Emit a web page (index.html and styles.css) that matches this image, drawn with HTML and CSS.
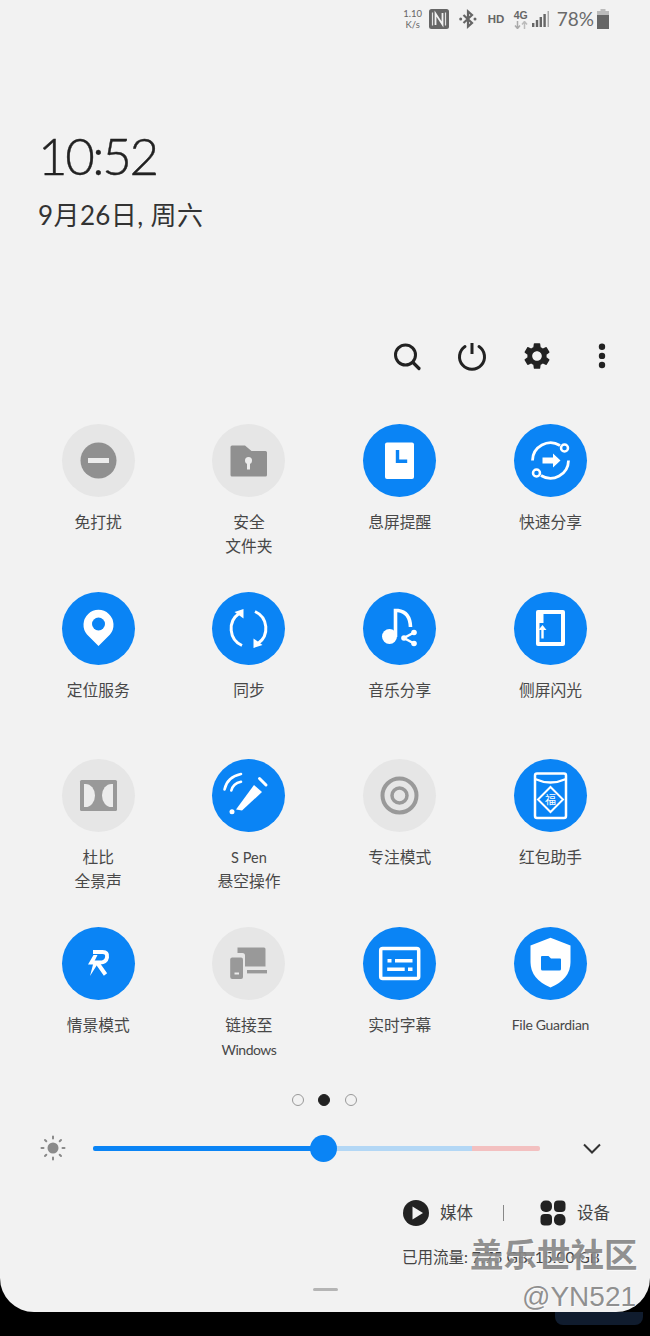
FILE: index.html
```html
<!DOCTYPE html>
<html lang="zh">
<head>
<meta charset="utf-8">
<title>快捷面板</title>
<link rel="stylesheet" href="styles.css">
</head>
<body>
<div class="panel">
  <div class="status">
    <div class="speed"><span>1.10</span><span>K/s</span></div>
    <svg class="st-nfc" width="20" height="20" viewBox="0 0 20 20"><rect width="20" height="20" rx="2.5" fill="#666"/><path d="M3.500 3.500v13M16.500 3.500v13" stroke="#e4e4e4" stroke-width="1.200"/><path d="M6.500 16V4.500L13.500 15.500V4" fill="none" stroke="#f2f2f2" stroke-width="1.800"/></svg>
    <svg class="st-bt" width="20" height="20" viewBox="0 0 20 20"><path d="M5.500 6l8.500 8-4 3.500V2.500l4 3.500-8.500 8" fill="none" stroke="#666" stroke-width="2.200"/><circle cx="2.700" cy="10" r="1.500" fill="#666"/><circle cx="17" cy="10" r="1.500" fill="#666"/></svg>
    <span class="st-hd">HD</span>
    <div class="st-4g"><span>4G</span><svg width="14" height="8" viewBox="0 0 14 8"><path d="M3.500 0v7M1 4.500l2.500 3 2.500-3" fill="none" stroke="#aaa" stroke-width="1.500"/><path d="M10.500 8V1M8 3.500l2.500-3 2.500 3" fill="none" stroke="#bbb" stroke-width="1.500"/></svg></div>
    <svg class="st-sig" width="18" height="18" viewBox="0 0 18 18"><rect x="0" y="13" width="2.400" height="4" fill="#666"/><rect x="3.800" y="10" width="2.400" height="7" fill="#666"/><rect x="7.600" y="7" width="2.400" height="10" fill="#666"/><rect x="11.400" y="4" width="2.400" height="13" fill="#666"/><rect x="15.500" y="1" width="1.500" height="16" fill="#aaa"/></svg>
    <span class="st-pct">78%</span>
    <svg class="st-bat" width="12" height="20" viewBox="0 0 12 20"><rect x="3.500" y="0" width="5" height="3" fill="#bbb"/><rect x="0" y="2" width="12" height="5" fill="#bbb"/><rect x="0" y="6" width="12" height="14" fill="#666"/></svg>
  </div>

  <div class="clock">10:52</div>
  <div class="date">9月26日, 周六</div>

  <div class="toolbar">
    <div class="tool"><svg width="32" height="32" viewBox="0 0 32 32"><circle cx="14.500" cy="15" r="10" fill="none" stroke="#222" stroke-width="3"/><path d="M22 22.500l6 6" stroke="#222" stroke-width="3.200" stroke-linecap="round"/></svg></div>
    <div class="tool"><svg width="32" height="32" viewBox="0 0 32 32"><path d="M9 6.500a12.500 12.500 0 1 0 14 0" fill="none" stroke="#222" stroke-width="3" stroke-linecap="round"/><path d="M16 3v11" stroke="#222" stroke-width="3"/></svg></div>
    <div class="tool"><svg width="32" height="32" viewBox="0 0 24 24"><path fill="#222" d="M19.140 12.940c.04-.3.06-.61.06-.94 0-.32-.02-.64-.07-.94l2.030-1.580a.49.49 0 0 0 .12-.61l-1.920-3.320a.488.488 0 0 0-.59-.22l-2.390.96c-.5-.38-1.030-.7-1.620-.94l-.36-2.540a.484.484 0 0 0-.48-.41h-3.840c-.24 0-.43.17-.47.41l-.36 2.540c-.59.24-1.130.57-1.620.94l-2.390-.96c-.22-.08-.47 0-.59.22L2.740 8.870c-.12.21-.08.47.12.61l2.030 1.580c-.05.3-.09.63-.09.94s.02.64.07.94l-2.030 1.580a.49.49 0 0 0-.12.61l1.920 3.320c.12.22.37.29.59.22l2.390-.96c.5.38 1.030.7 1.620.94l.36 2.540c.05.24.24.41.48.41h3.840c.24 0 .44-.17.47-.41l.36-2.540c.59-.24 1.130-.56 1.620-.94l2.390.96c.22.08.47 0 .59-.22l1.920-3.320c.12-.22.07-.47-.12-.61l-2.010-1.580zM12 15.600c-1.980 0-3.600-1.620-3.600-3.600s1.620-3.600 3.600-3.600 3.600 1.620 3.600 3.600-1.620 3.600-3.600 3.600z"/></svg></div>
    <div class="tool"><svg width="32" height="32" viewBox="0 0 32 32"><circle cx="16" cy="6.700" r="3.200" fill="#222"/><circle cx="16" cy="15.900" r="3.200" fill="#222"/><circle cx="16" cy="25" r="3.200" fill="#222"/></svg></div>
  </div>

  <div class="grid">
    <div class="tile">
      <div class="circle off"><svg width="73" height="73" viewBox="0 0 73 73"><circle cx="36.500" cy="36.500" r="18" fill="#909090"/><rect x="26" y="34" width="21" height="5" fill="#ececec"/></svg></div>
      <div class="label">免打扰</div>
    </div>
    <div class="tile">
      <div class="circle off"><svg width="73" height="73" viewBox="0 0 73 73"><path d="M20 21.500h13l6.500 5.500H53.500a1.500 1.500 0 0 1 1.500 1.500v22.500a1.500 1.500 0 0 1-1.500 1.500H20a1.500 1.500 0 0 1-1.500-1.500V23a1.500 1.500 0 0 1 1.500-1.500z" fill="#909090"/><circle cx="36.500" cy="36.500" r="3.500" fill="#ececec"/><rect x="35" y="37" width="3" height="8.500" fill="#ececec"/></svg></div>
      <div class="label">安全<br>文件夹</div>
    </div>
    <div class="tile">
      <div class="circle on"><svg width="73" height="73" viewBox="0 0 73 73"><rect x="22" y="18.500" width="29" height="36.500" rx="2" fill="#fff"/><path d="M34.500 26v11.200h9.700" fill="none" stroke="#0a84f5" stroke-width="3.400"/></svg></div>
      <div class="label">息屏提醒</div>
    </div>
    <div class="tile">
      <div class="circle on"><svg width="73" height="73" viewBox="0 0 73 73"><path d="M18.500 36.500A18 18 0 0 1 46 21.500M54.500 36.500A18 18 0 0 1 27 51.500" fill="none" stroke="#fff" stroke-width="2.800"/><circle cx="50.500" cy="24" r="3.500" fill="#0a84f5" stroke="#fff" stroke-width="2.500"/><circle cx="22.500" cy="49" r="3.500" fill="#0a84f5" stroke="#fff" stroke-width="2.500"/><path d="M28.500 33.500H39V29.500L46.500 36.500 39 43.500V39.500H28.500z" fill="#fff"/></svg></div>
      <div class="label">快速分享</div>
    </div>

    <div class="tile">
      <div class="circle on"><svg width="73" height="73" viewBox="0 0 73 73"><path d="M36.500 54L25 42.500a15 15 0 1 1 23 0z" fill="#fff"/><circle cx="36.500" cy="32" r="6.500" fill="#0a84f5"/></svg></div>
      <div class="label">定位服务</div>
    </div>
    <div class="tile">
      <div class="circle on"><svg width="73" height="73" viewBox="0 0 73 73"><path d="M30 53.500A18.500 18.500 0 0 1 27 21.500" fill="none" stroke="#fff" stroke-width="3"/><path d="M31.500 17v9.500L22.500 20z" fill="#fff"/><path d="M43 19.500A18.500 18.500 0 0 1 46 51.500" fill="none" stroke="#fff" stroke-width="3"/><path d="M41.500 56v-9.500L50.500 53z" fill="#fff"/></svg></div>
      <div class="label">同步</div>
    </div>
    <div class="tile">
      <div class="circle on"><svg width="73" height="73" viewBox="0 0 73 73"><circle cx="26.500" cy="44.500" r="7.500" fill="#fff"/><path d="M32.500 45V18.500h2.500Q47 20 47.500 35" fill="none" stroke="#fff" stroke-width="3.600"/><path d="M51 40.500L41 46l10 5.500" fill="none" stroke="#fff" stroke-width="2.500"/><circle cx="51" cy="40.500" r="2.800" fill="#fff"/><circle cx="41" cy="46" r="2.800" fill="#fff"/><circle cx="51" cy="51.500" r="2.800" fill="#fff"/></svg></div>
      <div class="label">音乐分享</div>
    </div>
    <div class="tile">
      <div class="circle on"><svg width="73" height="73" viewBox="0 0 73 73"><rect x="22" y="18" width="29" height="36" rx="2" fill="#fff"/><rect x="29.500" y="22" width="17.500" height="28" fill="#0a84f5"/><rect x="25.500" y="31" width="6" height="19" fill="#0a84f5"/><path d="M28.500 36V46.500" fill="none" stroke="#fff" stroke-width="2.400"/><path d="M24.500 38L28.500 33l4 5z" fill="#fff"/></svg></div>
      <div class="label">侧屏闪光</div>
    </div>

    <div class="tile">
      <div class="circle off"><svg width="73" height="73" viewBox="0 0 73 73"><rect x="18" y="21" width="37" height="31" rx="1.500" fill="#999"/><path d="M22 25h1.500a9.500 11.500 0 0 1 0 23H22z" fill="#ececec"/><path d="M51 25h-1.500a9.500 11.500 0 0 0 0 23H51z" fill="#ececec"/></svg></div>
      <div class="label">杜比<br>全景声</div>
    </div>
    <div class="tile">
      <div class="circle on"><svg width="73" height="73" viewBox="0 0 73 73"><path d="M24 50.500L42 26l8 7-20 18.500z" fill="#fff"/><path d="M47.500 19.500l6.500 6.500" stroke="#fff" stroke-width="3" stroke-linecap="round"/><circle cx="20" cy="52.700" r="2.500" fill="#fff"/><path d="M12.500 30.500Q15 18 29 15" fill="none" stroke="#fff" stroke-width="2.600" stroke-linecap="round"/><path d="M19.300 31.500Q21 24.500 29 22.700" fill="none" stroke="#fff" stroke-width="2.600" stroke-linecap="round"/></svg></div>
      <div class="label"><span class="latin">S Pen</span><br>悬空操作</div>
    </div>
    <div class="tile">
      <div class="circle off"><svg width="73" height="73" viewBox="0 0 73 73"><circle cx="36.500" cy="36.500" r="17" fill="none" stroke="#999" stroke-width="4"/><circle cx="36.500" cy="36.500" r="7.500" fill="none" stroke="#999" stroke-width="3.500"/></svg></div>
      <div class="label">专注模式</div>
    </div>
    <div class="tile">
      <div class="circle on"><svg width="73" height="73" viewBox="0 0 73 73"><rect x="21" y="14.500" width="31" height="44.500" rx="2" fill="none" stroke="#fff" stroke-width="2.500"/><path d="M21 20Q36.500 27 52 20" fill="none" stroke="#fff" stroke-width="2.300"/><path d="M36.500 28L49 40.500 36.500 53 24 40.500z" fill="none" stroke="#fff" stroke-width="2"/><text x="36.500" y="45" class="fu">福</text></svg></div>
      <div class="label">红包助手</div>
    </div>

    <div class="tile">
      <div class="circle on"><svg width="73" height="73" viewBox="0 0 73 73"><path d="M31 25H40.500Q46 25 45 30.500 44 35.500 38 35.500H35L43.500 47.500" fill="none" stroke="#fff" stroke-width="4"/><path d="M31.500 28L26 37.500H31L28 49 37.500 34H32.500L35.500 28z" fill="#fff"/></svg></div>
      <div class="label">情景模式</div>
    </div>
    <div class="tile">
      <div class="circle off"><svg width="73" height="73" viewBox="0 0 73 73"><path d="M25.500 20.500H52a1.500 1.500 0 0 1 1.500 1.500v17.500H33v-11a2.500 2.500 0 0 0-2.500-2.500h-5z" fill="#999"/><rect x="35" y="43" width="20" height="3.400" fill="#999"/><rect x="18.200" y="30.400" width="12.800" height="21.500" rx="2" fill="#999"/><rect x="22.500" y="45.500" width="4.500" height="2" fill="#ececec"/></svg></div>
      <div class="label">链接至<br><span class="latin-small">Windows</span></div>
    </div>
    <div class="tile">
      <div class="circle on"><svg width="73" height="73" viewBox="0 0 73 73"><rect x="17.700" y="21.500" width="38" height="30" rx="2" fill="none" stroke="#fff" stroke-width="3.500"/><rect x="24.500" y="32" width="4" height="3.500" fill="#fff"/><rect x="32" y="32" width="17.500" height="3.500" fill="#fff"/><rect x="24.200" y="40.500" width="17.500" height="3.500" fill="#fff"/><rect x="45" y="40.500" width="4.500" height="3.500" fill="#fff"/></svg></div>
      <div class="label">实时字幕</div>
    </div>
    <div class="tile">
      <div class="circle on"><svg width="73" height="73" viewBox="0 0 73 73"><path d="M36.500 10.700L56.500 18.500V35Q56.500 52 36.500 60.500 16.500 52 16.500 35V18.500z" fill="#fff"/><path d="M28 29h6.500l2.500 2.500h9a1 1 0 0 1 1 1V42a1.500 1.500 0 0 1-1.500 1.500h-17A1.500 1.500 0 0 1 27 42V30a1 1 0 0 1 1-1z" fill="#0a84f5"/></svg></div>
      <div class="label latin-label">File Guardian</div>
    </div>
  </div>

  <div class="dots">
    <span class="dot"></span>
    <span class="dot current"></span>
    <span class="dot"></span>
  </div>

  <div class="brightness">
    <svg class="sun" width="30" height="30" viewBox="0 0 30 30"><circle cx="15" cy="15" r="5.500" fill="#8a8a8a"/><g stroke="#8a8a8a" stroke-width="2" stroke-linecap="round"><path d="M15 3.500v2M15 24.500v2M3.500 15h2M24.500 15h2M7 7l1.300 1.300M21.700 21.700L23 23M23 7l-1.300 1.300M8.300 21.700L7 23"/></g></svg>
    <div class="track">
      <span class="seg seg-a"></span>
      <span class="seg seg-b"></span>
      <span class="seg seg-c"></span>
      <span class="thumb"></span>
    </div>
    <svg class="chev" width="30" height="30" viewBox="0 0 30 30"><path d="M7 11.500l8 8 8-8" fill="none" stroke="#333" stroke-width="2"/></svg>
  </div>

  <div class="media">
    <svg width="26" height="26" viewBox="0 0 26 26"><circle cx="13" cy="13" r="13" fill="#222"/><path d="M9.500 6.500L20 13 9.500 19.500z" fill="#f2f2f2"/></svg>
    <span class="media-text first">媒体</span>
    <span class="divider"></span>
    <svg width="26" height="26" viewBox="0 0 26 26"><rect x="0.500" y="0.500" width="11.500" height="11.500" rx="5" fill="#222"/><rect x="14" y="0.500" width="11.500" height="11.500" rx="4" fill="#222"/><rect x="0.500" y="14" width="11.500" height="11.500" rx="4" fill="#222"/><rect x="14" y="14" width="11.500" height="11.500" rx="5" fill="#222"/></svg>
    <span class="media-text">设备</span>
  </div>

  <div class="usage">已用流量: 7.75 GB/15.00 GB</div>
  <div class="handle"></div>

  <div class="mark mark-cn">盖乐世社区</div>
  <div class="mark mark-id">@YN521</div>
</div>
<div class="strip"><span class="strip-shape"></span></div>
</body>
</html>
```

FILE: styles.css
```css
* { box-sizing: border-box; }
html, body { margin: 0; padding: 0; background: #000; }
body {
  width: 650px;
  height: 1336px;
  overflow: hidden;
  font-family: Lato, "Noto Sans CJK SC", sans-serif;
}
.panel {
  position: relative;
  height: 1312px;
  background: #f2f2f2;
  border-radius: 0 0 34px 34px;
  overflow: hidden;
}

/* status bar */
.status {
  height: 38px;
  display: flex;
  align-items: center;
  justify-content: flex-end;
  padding-right: 41px;
  color: #666;
}
.speed {
  display: flex;
  flex-direction: column;
  align-items: center;
  font-size: 9.500px;
  line-height: 11px;
  width: 18px;
  white-space: nowrap;
}
.st-nfc { margin-left: 7px; }
.st-bt { margin-left: 9px; }
.st-hd { margin-left: 10px; font: 700 11.500px "Liberation Sans", sans-serif; width: 16px; }
.st-4g {
  margin-left: 10px;
  width: 14px;
  display: flex;
  flex-direction: column;
  font: 700 10.500px/11px "Liberation Sans", sans-serif;
  align-items: center;
}
.st-sig { margin-left: 4px; }
.st-pct { margin-left: 7px; font-size: 19px; line-height: 20px; color: #6a6a6a; }
.st-bat { margin-left: 3px; }

/* clock */
.clock {
  margin-top: 88px;
  padding-left: 38px;
  font-size: 51px;
  font-weight: 300;
  line-height: 60px;
  letter-spacing: -2.400px;
  color: #222;
  -webkit-text-stroke: 0.4px #222;
}
.date {
  margin-top: 11px;
  padding-left: 38px;
  font-size: 26px;
  line-height: 36px;
  letter-spacing: 0.400px;
  color: #333;
}

/* toolbar */
.toolbar {
  margin-top: 103px;
  height: 40px;
  display: flex;
  justify-content: flex-end;
  padding-right: 16px;
}
.tool {
  width: 65px;
  display: flex;
  align-items: center;
  justify-content: center;
}

/* tiles */
.grid {
  margin-top: 48px;
  padding: 0 24.200px 0 22.800px;
  display: grid;
  grid-template-columns: repeat(4, 1fr);
  grid-auto-rows: 167.500px;
}
.tile {
  display: flex;
  flex-direction: column;
  align-items: center;
}
.circle {
  width: 73px;
  height: 73px;
  border-radius: 50%;
  flex: none;
}
.circle svg { display: block; }
.on { background: #0a84f5; }
.off { background: #e6e6e6; }
.label {
  margin-top: 13px;
  font-size: 15.750px;
  line-height: 24px;
  color: #484848;
  text-align: center;
  white-space: nowrap;
}
.latin { font-size: 14.500px; line-height: 1; }
.latin-small { font-size: 14px; line-height: 1; letter-spacing: -0.500px; }
.latin-label { font-size: 14px; letter-spacing: -0.300px; }
.fu {
  font-size: 11px;
  fill: #fff;
  text-anchor: middle;
  font-family: "Noto Sans CJK SC", sans-serif;
}

/* pager dots */
.dots {
  height: 12px;
  display: flex;
  justify-content: center;
  align-items: center;
  gap: 14.500px;
  padding-right: 2px;
}
.dot {
  width: 12px;
  height: 12px;
  border-radius: 50%;
  border: 1.500px solid #999;
}
.dot.current { background: #222; border-color: #222; }

/* brightness */
.brightness {
  margin-top: 27px;
  height: 30px;
  display: flex;
  align-items: center;
  padding-left: 38px;
}
.track {
  position: relative;
  margin-left: 25px;
  width: 447px;
  height: 5px;
  display: flex;
}
.seg { display: block; height: 5px; }
.seg-a { width: 230px; background: #0a84f5; border-radius: 2px 0 0 2px; }
.seg-b { width: 149px; background: #b3d7f5; }
.seg-c { width: 68px; background: #f3c0c0; border-radius: 0 2px 2px 0; }
.thumb {
  position: absolute;
  left: 216.500px;
  top: -11px;
  width: 27px;
  height: 27px;
  border-radius: 50%;
  background: #0a84f5;
}
.chev { margin-left: 37px; }

/* media row */
.media {
  margin-top: 35px;
  height: 30px;
  display: flex;
  align-items: center;
  justify-content: flex-end;
  padding-right: 40px;
}
.media-text {
  margin-left: 11px;
  font-size: 16.500px;
  color: #444;
  line-height: 24px;
}
.media-text.first { margin-right: 30px; }
.divider {
  width: 1px;
  height: 16px;
  background: #888;
  margin-right: 36px;
}

/* usage + handle */
.usage {
  margin-top: 17px;
  height: 24px;
  padding-left: 402px;
  font-size: 15.500px;
  line-height: 24px;
  color: #444;
  white-space: nowrap;
}
.handle {
  margin: 19px auto 0;
  width: 25px;
  height: 3px;
  border-radius: 2px;
  background: #b5b5b5;
}

/* watermark over the panel */
.mark {
  position: absolute;
  color: rgba(125, 125, 125, 0.85);
  text-shadow: 1px 1px 0 rgba(255, 255, 255, 0.6);
  white-space: nowrap;
}
.mark-cn {
  left: 470px;
  top: 1228px;
  font-size: 33.500px;
  line-height: 50px;
  font-weight: 700;
  font-family: "Noto Sans CJK SC", sans-serif;
}
.mark-id {
  left: 522px;
  top: 1280px;
  font-size: 28px;
  line-height: 34px;
  font-family: "Liberation Sans", sans-serif;
}

/* under the panel */
.strip {
  height: 24px;
  display: flex;
  justify-content: flex-end;
  padding-right: 7px;
}
.strip-shape {
  width: 88px;
  height: 13px;
  background: #101c2e;
  border-radius: 0 0 8px 8px;
}
```
